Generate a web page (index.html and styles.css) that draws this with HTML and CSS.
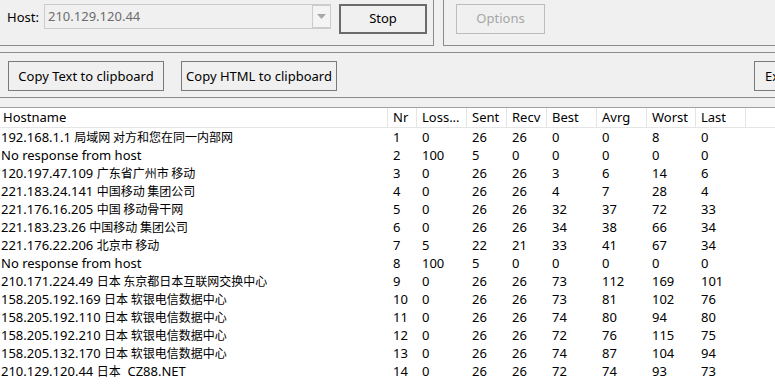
FILE: index.html
```html
<!DOCTYPE html>
<html lang="en">
<head>
    <meta charset="UTF-8">
    <meta name="viewport" content="width=device-width, initial-scale=1.0">
    <title>WinMTR</title>
    <link rel="stylesheet" href="styles.css">
</head>
<body>

    <!-- Host / options group boxes -->
    <div class="top">
        <div class="group group-host">
            <label class="host-label">Host:</label>
            <div class="combo">
                <span class="combo-text">210.129.120.44</span>
                <span class="combo-arrow"><svg width="9" height="5" viewBox="0 0 9 5"><path d="M0 0h9L4.5 5z" fill="#a8a8a8"/></svg></span>
            </div>
            <button class="btn btn-default">Stop</button>
        </div>
        <div class="group group-options">
            <button class="btn btn-disabled">Options</button>
        </div>
    </div>

    <!-- Toolbar -->
    <div class="toolbar">
        <button class="btn btn-wide">Copy Text to clipboard</button>
        <button class="btn btn-wide">Copy HTML to clipboard</button>
        <button class="btn btn-export">Export TEXT</button>
    </div>

    <!-- Results list -->
    <div class="list">
        <div class="row head">
            <div>Hostname</div><div>Nr</div><div>Loss...</div><div>Sent</div><div>Recv</div><div>Best</div><div>Avrg</div><div>Worst</div><div>Last</div><div></div>
        </div>
        <div class="row"><div>192.168.1.1 <span class="cjk">局域网 对方和您在同一内部网</span></div><div>1</div><div>0</div><div>26</div><div>26</div><div>0</div><div>0</div><div>8</div><div>0</div></div>
        <div class="row"><div>No response from host</div><div>2</div><div>100</div><div>5</div><div>0</div><div>0</div><div>0</div><div>0</div><div>0</div></div>
        <div class="row"><div>120.197.47.109 <span class="cjk">广东省广州市 移动</span></div><div>3</div><div>0</div><div>26</div><div>26</div><div>3</div><div>6</div><div>14</div><div>6</div></div>
        <div class="row"><div>221.183.24.141 <span class="cjk">中国移动 集团公司</span></div><div>4</div><div>0</div><div>26</div><div>26</div><div>4</div><div>7</div><div>28</div><div>4</div></div>
        <div class="row"><div>221.176.16.205 <span class="cjk">中国 移动骨干网</span></div><div>5</div><div>0</div><div>26</div><div>26</div><div>32</div><div>37</div><div>72</div><div>33</div></div>
        <div class="row"><div>221.183.23.26 <span class="cjk">中国移动 集团公司</span></div><div>6</div><div>0</div><div>26</div><div>26</div><div>34</div><div>38</div><div>66</div><div>34</div></div>
        <div class="row"><div>221.176.22.206 <span class="cjk">北京市 移动</span></div><div>7</div><div>5</div><div>22</div><div>21</div><div>33</div><div>41</div><div>67</div><div>34</div></div>
        <div class="row"><div>No response from host</div><div>8</div><div>100</div><div>5</div><div>0</div><div>0</div><div>0</div><div>0</div><div>0</div></div>
        <div class="row"><div>210.171.224.49 <span class="cjk">日本 东京都日本互联网交换中心</span></div><div>9</div><div>0</div><div>26</div><div>26</div><div>73</div><div>112</div><div>169</div><div>101</div></div>
        <div class="row"><div>158.205.192.169 <span class="cjk">日本 软银电信数据中心</span></div><div>10</div><div>0</div><div>26</div><div>26</div><div>73</div><div>81</div><div>102</div><div>76</div></div>
        <div class="row"><div>158.205.192.110 <span class="cjk">日本 软银电信数据中心</span></div><div>11</div><div>0</div><div>26</div><div>26</div><div>74</div><div>80</div><div>94</div><div>80</div></div>
        <div class="row"><div>158.205.192.210 <span class="cjk">日本 软银电信数据中心</span></div><div>12</div><div>0</div><div>26</div><div>26</div><div>72</div><div>76</div><div>115</div><div>75</div></div>
        <div class="row"><div>158.205.132.170 <span class="cjk">日本 软银电信数据中心</span></div><div>13</div><div>0</div><div>26</div><div>26</div><div>74</div><div>87</div><div>104</div><div>94</div></div>
        <div class="row"><div>210.129.120.44 <span class="cjk">日本</span>&nbsp;&nbsp;CZ88.NET</div><div>14</div><div>0</div><div>26</div><div>26</div><div>72</div><div>74</div><div>93</div><div>73</div></div>
    </div>

</body>
</html>
```

FILE: styles.css
```css
body {
    margin: 0;
    width: 775px;
    height: 388px;
    overflow: hidden;
    background-color: #f0f0f0;
    font-family: "Noto Sans", "Noto Sans CJK SC", sans-serif;
    font-size: 13px;
    color: #000;
}

.cjk {
    font-family: "Noto Sans CJK SC", sans-serif;
    font-size: 12px;
}

/* Group boxes */
.top {
    display: flex;
    height: 46px;
    margin-bottom: 6px;
}

.group {
    display: flex;
    align-items: flex-start;
    box-sizing: border-box;
    height: 46px;
    padding-top: 4px;
    border-bottom: 1px solid #8c8c8c;
}

.group-host {
    width: 434px;
    padding-left: 7px;
    border-right: 1px solid #8c8c8c;
}

.group-options {
    flex: 1;
    margin-left: 9px;
    padding-left: 12px;
    border-left: 1px solid #8c8c8c;
}

.host-label {
    line-height: 27px;
    width: 37px;
}

.combo {
    display: flex;
    justify-content: space-between;
    box-sizing: border-box;
    width: 287px;
    height: 25px;
    border: 1px solid #cccccc;
    background: #f0f0f0;
}

.combo-text {
    padding-left: 3px;
    line-height: 22px;
    color: #6d6d6d;
}

.combo-arrow {
    display: flex;
    align-items: center;
    justify-content: center;
    box-sizing: border-box;
    width: 18px;
    border: 1px solid #cccccc;
    border-right-width: 0;
    background: #f4f4f4;
}

/* Buttons */
.btn {
    box-sizing: border-box;
    height: 30px;
    padding: 0;
    font-family: inherit;
    font-size: 13px;
    color: #000;
    background: #f0f0f0;
    border: 1px solid #7a7a7a;
    flex-shrink: 0;
}

.btn-default {
    width: 88px;
    margin-left: 8px;
    padding-bottom: 2px;
    border: 2px solid #6b6b6b;
}

.btn-disabled {
    width: 89px;
    padding-bottom: 2px;
    color: #a6a6a6;
    border-color: #bcbcbc;
}

/* Toolbar */
.toolbar {
    display: flex;
    height: 46px;
    box-sizing: border-box;
    padding: 8px 0 0 8px;
    border-top: 1px solid #8c8c8c;
    border-bottom: 1px solid #8c8c8c;
    overflow: hidden;
}

.btn-wide {
    width: 156px;
    margin-right: 17px;
}

.btn-export {
    width: 110px;
    margin-left: 400px;
    text-align: left;
    padding-left: 10px;
}

/* List view */
.list {
    margin-top: 9px;
    background: #fff;
    border-top: 1px solid #a0a0a0;
    height: 280px;
    overflow: hidden;
}

.row {
    display: grid;
    grid-template-columns: 388px 29px 50px 40px 40px 50px 50px 49px 50px 1fr;
    height: 18px;
    line-height: 18px;
    white-space: nowrap;
}

.row > div {
    padding-left: 5px;
    overflow: hidden;
}

.row > div:first-child {
    padding-left: 1px;
}

.head {
    height: 19px;
    line-height: 19px;
    border-bottom: 1px solid #e5e5e5;
}

.head > div {
    border-right: 1px solid #e5e5e5;
}

.head > div:first-child {
    padding-left: 3px;
}

.head > div:last-child {
    border-right: 0;
}
```
